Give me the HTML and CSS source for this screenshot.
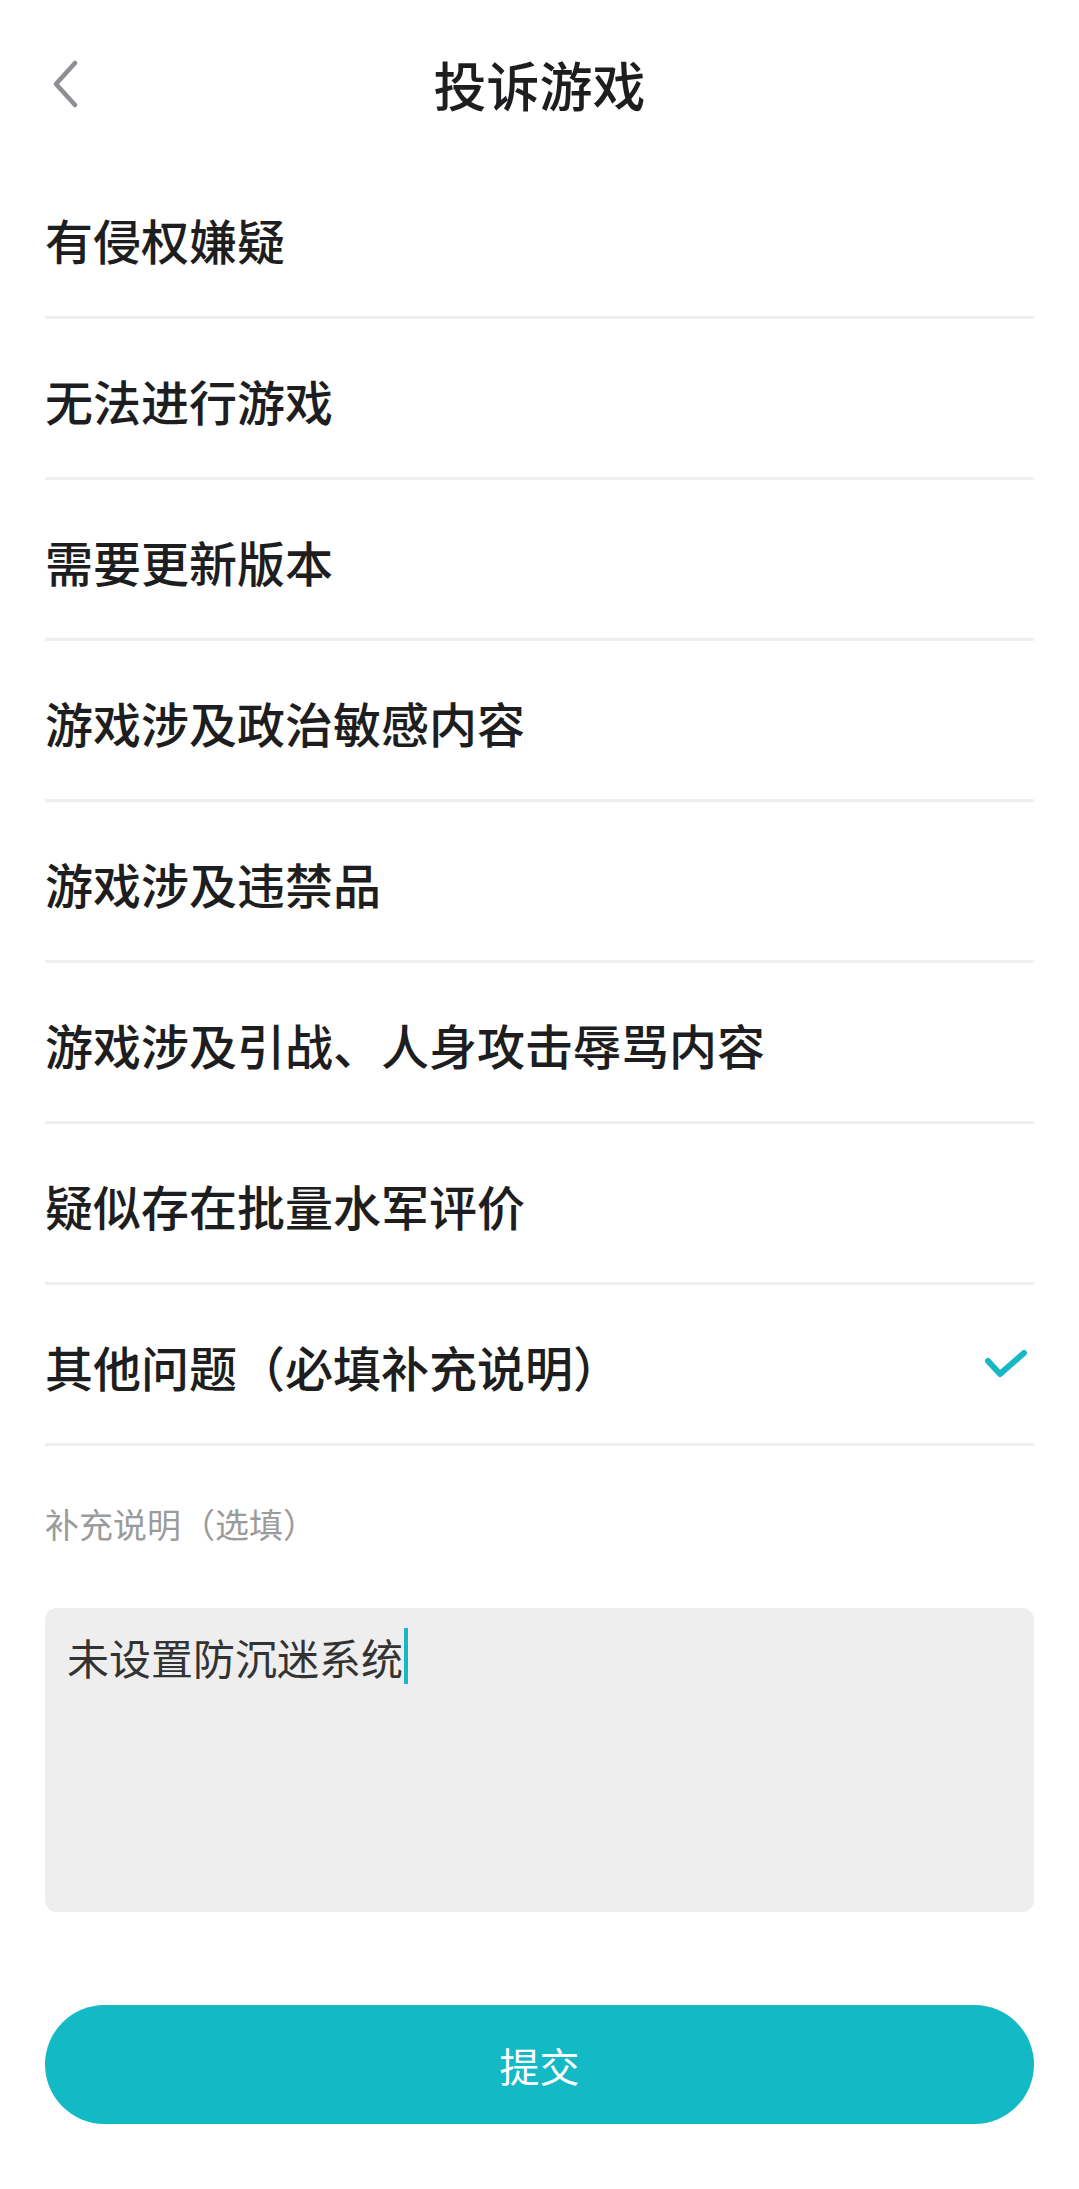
FILE: index.html
```html
<!DOCTYPE html>
<html lang="zh-CN">
<head>
  <meta charset="UTF-8" />
  <meta name="viewport" content="width=device-width, initial-scale=1.0"/>
  <title>投诉游戏</title>
  <link rel="stylesheet" href="styles.css">
</head>
<body>
  <header class="topbar">
    <a class="back" href="#" aria-label="返回">
      <svg width="30" height="48" viewBox="0 0 30 48">
        <polyline points="25,3 6,24 25,45" fill="none" stroke="#8c8f94" stroke-width="4.5" stroke-linecap="round" stroke-linejoin="round"/>
      </svg>
    </a>
    <h1>投诉游戏</h1>
  </header>

  <div class="container">
    <!-- 投诉原因 -->
    <ul class="reasons">
      <li>有侵权嫌疑</li>
      <li>无法进行游戏</li>
      <li>需要更新版本</li>
      <li>游戏涉及政治敏感内容</li>
      <li>游戏涉及违禁品</li>
      <li>游戏涉及引战、人身攻击辱骂内容</li>
      <li>疑似存在批量水军评价</li>
      <li class="selected">
        <span>其他问题（必填补充说明）</span>
        <svg class="check" width="46" height="34" viewBox="0 0 46 34">
          <polyline points="5,12 17,25 41,4" fill="none" stroke="#17b8c4" stroke-width="6" stroke-linecap="round" stroke-linejoin="round"/>
        </svg>
      </li>
    </ul>

    <div class="note-label">补充说明（选填）</div>
    <div class="note-box">未设置防沉迷系统<span class="caret"></span></div>

    <button type="button" class="submit">提交</button>
  </div>
</body>
</html>
```

FILE: styles.css
```css
body {
  margin: 0;
  padding: 0;
  background: #fff;
  font-family: "Noto Sans CJK SC", "Noto Sans", sans-serif;
  color: #1e1e20;
}
.topbar {
  position: relative;
  height: 158px;
  display: flex;
  justify-content: center;
}
.topbar h1 {
  margin: 54px 0 0;
  font-size: 53px;
  line-height: 60px;
  font-weight: 500;
}
.back {
  position: absolute;
  left: 50px;
  top: 60px;
}
.container { padding: 0 45px; }
.reasons {
  list-style: none;
  margin: 0;
  padding: 0;
}
.reasons li {
  height: 154px;
  padding-top: 4px;
  border-bottom: 3px solid #efefef;
  display: flex;
  align-items: center;
  justify-content: space-between;
  font-size: 48px;
  font-weight: 500;
}
.reasons li.selected .check { margin-right: 5px; }
.note-label {
  margin-top: 58px;
  font-size: 34px;
  line-height: 40px;
  color: #9b9b9b;
}
.note-box {
  margin-top: 64px;
  height: 264px;
  background: #eeeeee;
  border-radius: 12px;
  padding: 20px 22px;
  font-size: 42px;
  line-height: 58px;
  color: #333;
}
.caret {
  display: inline-block;
  width: 4px;
  height: 56px;
  background: #17b8c4;
  vertical-align: top;
  margin-left: 1px;
}
.submit {
  display: block;
  width: 100%;
  height: 119px;
  margin-top: 93px;
  border: none;
  border-radius: 60px;
  background: #13b9c5;
  color: #fff;
  font-family: inherit;
  font-size: 40px;
  cursor: pointer;
}
```
